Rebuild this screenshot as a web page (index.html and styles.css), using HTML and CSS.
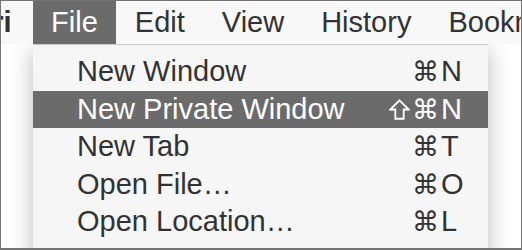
FILE: index.html
```html
<!DOCTYPE html>
<html>
<head>
<meta charset="utf-8">
<link rel="stylesheet" href="styles.css">
</head>
<body>
<div class="frame">
  <div class="menubar">
    <span class="app">Safari</span>
    <span class="item active">File</span>
    <span class="item">Edit</span>
    <span class="item">View</span>
    <span class="item">History</span>
    <span class="item">Bookmarks</span>
  </div>
  <div class="stage">
    <div class="menu">
      <div class="row"><span class="label">New Window</span><span class="mods"><span class="cmd">⌘</span></span><span class="key">N</span></div>
      <div class="row selected"><span class="label">New Private Window</span><span class="mods"><svg class="shift" viewBox="0 0 20 20" width="21" height="21"><polygon points="10,1.2 18.8,10 14,10 14,18.8 6,18.8 6,10 1.2,10" fill="none" stroke="currentColor" stroke-width="1.7" stroke-linejoin="miter"/></svg><span class="cmd">⌘</span></span><span class="key">N</span></div>
      <div class="row"><span class="label">New Tab</span><span class="mods"><span class="cmd">⌘</span></span><span class="key">T</span></div>
      <div class="row"><span class="label">Open File…</span><span class="mods"><span class="cmd">⌘</span></span><span class="key">O</span></div>
      <div class="row"><span class="label">Open Location…</span><span class="mods"><span class="cmd">⌘</span></span><span class="key">L</span></div>
    </div>
  </div>
</div>
</body>
</html>
```

FILE: styles.css
```css
* { box-sizing: border-box; }
html, body { margin: 0; padding: 0; }
body {
  width: 522px;
  height: 250px;
  overflow: hidden;
  font-family: "Liberation Sans", Arial, "DejaVu Sans", sans-serif;
  font-size: 29px;
  color: #323232;
  background: #ffffff;
}
.frame {
  width: 522px;
  height: 250px;
  border: 1px solid #747474;
  border-bottom-width: 2px;
  overflow: hidden;
  display: flex;
  flex-direction: column;
}
.menubar {
  height: 43px;
  flex: none;
  display: flex;
  align-items: stretch;
  background: #f8f8f8;
  white-space: nowrap;
  position: relative;
  z-index: 2;
}
.app {
  font-weight: bold;
  margin-left: -70px;
  padding-right: 21px;
  display: flex;
  align-items: center;
}
.item {
  padding: 0 18.5px;
  display: flex;
  align-items: center;
  padding-bottom: 1px;
}
.item.active {
  background: #6b6b6b;
  color: #ffffff;
}
.stage {
  flex: 1;
  display: flex;
  padding-left: 32px;
  background: #ffffff;
}
.menu {
  width: 455px;
  height: 240px;
  background: #f6f6f6;
  border-top: 1px solid #c9c9c9;
  padding-top: 8px;
  box-shadow: 0 6px 22px rgba(0, 0, 0, 0.28);
  position: relative;
  z-index: 1;
}
.row {
  height: 37.5px;
  display: flex;
  align-items: center;
  padding-left: 44px;
  padding-right: 22px;
  white-space: nowrap;
}
.row.selected {
  background: #6b6b6b;
  color: #ffffff;
}
.label { flex: 1; }
.mods {
  display: flex;
  align-items: center;
  gap: 2px;
}
.cmd {
  font-family: "DejaVu Sans", sans-serif;
  font-size: 27px;
  line-height: 1;
}
.shift {
  display: block;
  flex: none;
  margin-top: 1px;
}
.key {
  width: 27px;
  padding-left: 2px;
}
```
